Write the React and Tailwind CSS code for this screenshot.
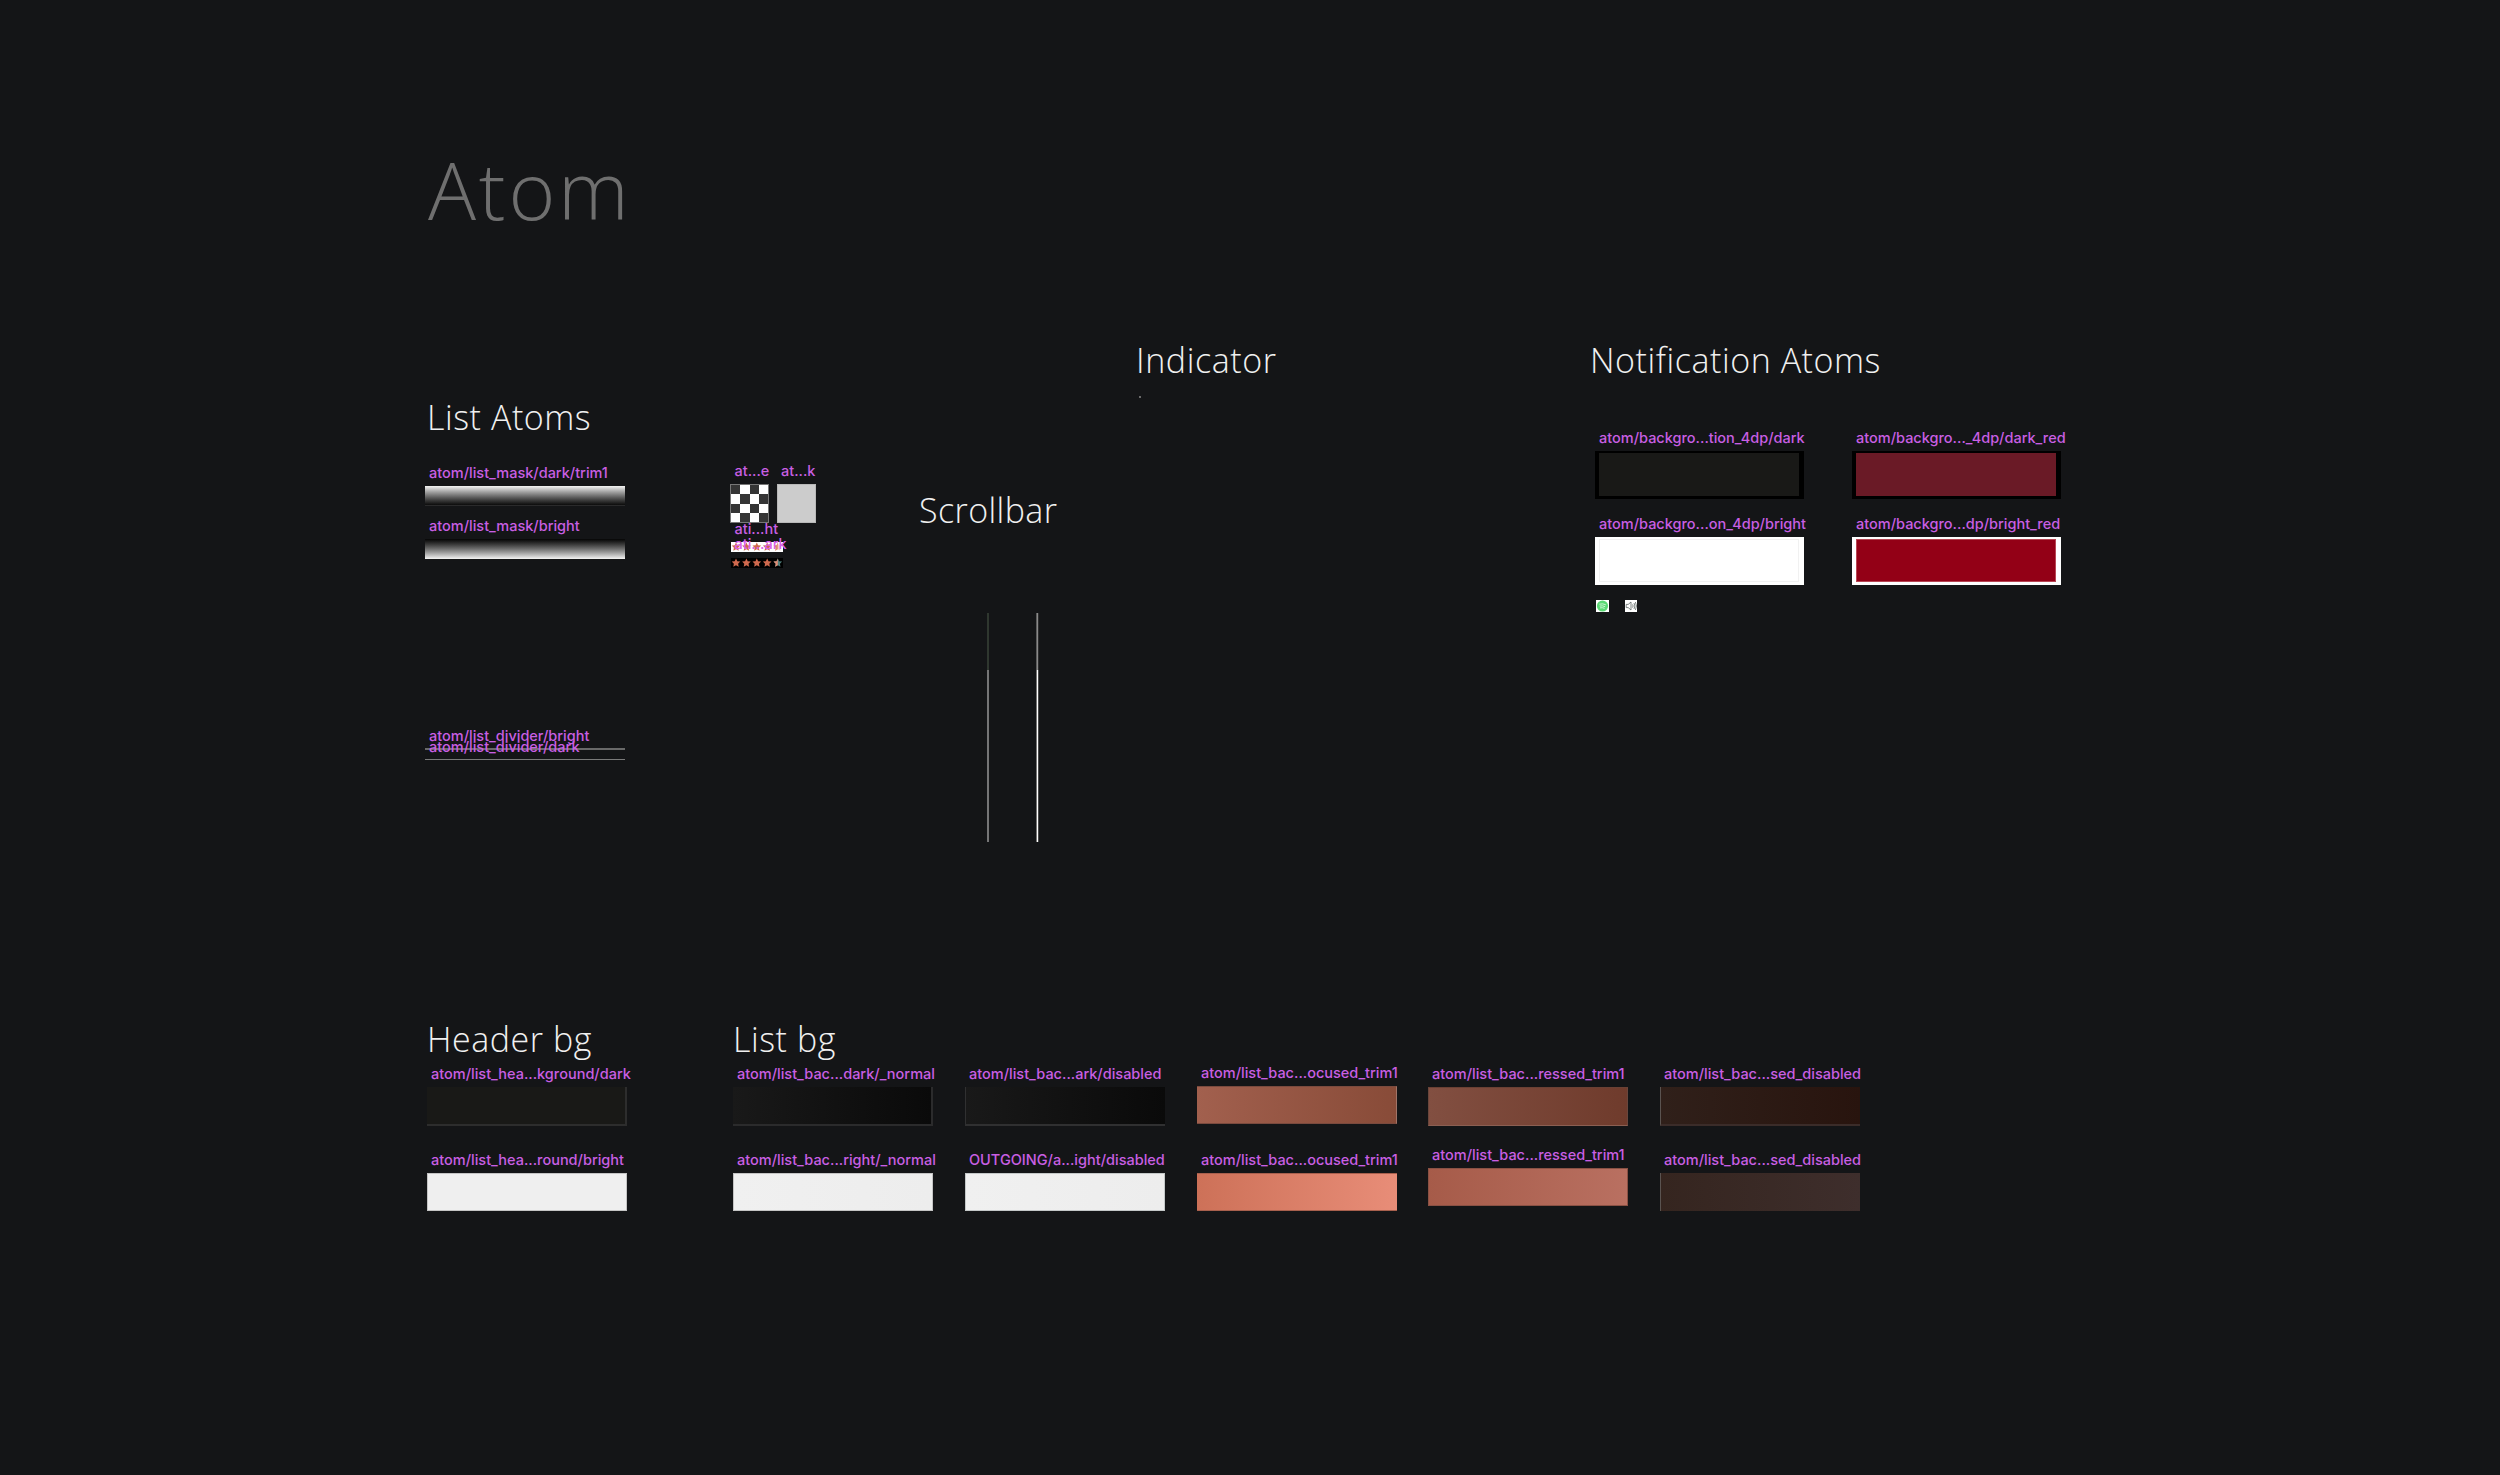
import { twMerge } from "tailwind-merge";

const STAR = "M5 0.5 6.3 3.2 9.3 3.6 7.1 5.7 7.7 8.8 5 7.3 2.3 8.8 2.9 5.7 0.7 3.6 3.7 3.2Z";

function Heading({ children, className }) {
  return (
    <h2
      className={twMerge(
        "font-['Open_Sans',sans-serif] text-[34px] leading-[46px] font-light tracking-[0.55px] whitespace-nowrap text-[#f0f0f0]",
        className
      )}
    >
      {children}
    </h2>
  );
}

function Label({ children, className }) {
  return (
    <div
      className={twMerge(
        "h-[18px] font-['Inter',sans-serif] text-[14.5px] leading-[18px] font-[450] whitespace-nowrap text-[#c95fe3]",
        className
      )}
    >
      {children}
    </div>
  );
}

function Swatch({ label, box }) {
  return (
    <div className="w-[200px]">
      <Label className="mb-1 pl-1">{label}</Label>
      <div className={twMerge("h-[39px]", box)} />
    </div>
  );
}

function Notification({ label, outer, inner }) {
  return (
    <div className="w-[210px]">
      <Label className="mb-1 pl-1">{label}</Label>
      <div className={twMerge("h-12 w-[209px] pt-0.5 pr-[4px] pb-[3px] pl-[4px]", outer)}>
        <div className={twMerge("h-full w-[200px]", inner)} />
      </div>
    </div>
  );
}

function Rating({ className, tail }) {
  return (
    <svg viewBox="0 0 52 10" className={twMerge("block h-2.5 w-[52px]", className)}>
      <path d={STAR} fill="#d0694e" />
      <path d={STAR} transform="translate(10.4 0)" fill="#d0694e" />
      <path d={STAR} transform="translate(20.8 0)" fill="#d0694e" />
      <path d={STAR} transform="translate(31.2 0)" fill="#d0694e" />
      <g transform="translate(41.8 0)">
        <path d={STAR} fill={tail} />
        <path d="M5 0.5V7.3L2.3 8.8 2.9 5.7 0.7 3.6 3.7 3.2Z" fill="#e08a72" />
      </g>
    </svg>
  );
}

function ListAtoms() {
  return (
    <section className="pt-[151px]">
      <Heading className="pl-0.5">List Atoms</Heading>
      <Label className="mt-6 pl-1">atom/list_mask/dark/trim1</Label>
      <div className="mt-1 h-5 w-[200px] border-b border-[#2a2a2b] bg-linear-to-b from-[#f4f4f4] to-[#0c0c0c]" />
      <Label className="mt-[11px] pl-1">atom/list_mask/bright</Label>
      <div className="mt-1 h-5 w-[200px] bg-linear-to-b from-[#060606] to-[#f4f4f4]" />
      {/* the two divider symbols sit 11px apart, so their labels collide */}
      <div className="relative mt-[168px] h-[34px] w-[200px] pt-[21px]">
        <div className="h-0.5 bg-[#696969]" />
        <div className="mt-[9px] h-px bg-[#7a7a7a]" />
        <Label className="absolute top-0 left-1">atom/list_divider/bright</Label>
        <Label className="absolute top-[11px] left-1">atom/list_divider/dark</Label>
      </div>
    </section>
  );
}

function ImageAtoms() {
  return (
    <section className="pt-[219px]">
      <div className="flex gap-2">
        <div className="w-[39px]">
          <Label className="mb-1 pl-[4.5px]">at...e</Label>
          <div className="grid h-[39px] grid-cols-4 grid-rows-4 border border-[#777] bg-white">
            {Array.from({ length: 16 }, (_, i) => (
              <div key={i} className={(i + Math.floor(i / 4)) % 2 ? "bg-white" : "bg-[#353535]"} />
            ))}
          </div>
        </div>
        <div className="w-[39px]">
          <Label className="mb-1 pl-1">at...k</Label>
          <div className="h-[39px] border border-[#b8b8b8] bg-[#cccccc]" />
        </div>
      </div>
      <Label className="mt-[-3px] pl-[4.5px]">ati...ht</Label>
      <div className="relative mt-1 ml-[0.5px] w-[52px]">
        <Rating className="bg-white" tail="#f0d0c4" />
        <Label className="absolute -top-[7px] left-1 text-[#d860ea]">ati...ark</Label>
        <Rating className="mt-1.5 bg-black" tail="#4f7f7c" />
      </div>
    </section>
  );
}

function Scrollbar() {
  return (
    <section className="pt-[244px]">
      <Heading className="pl-px tracking-[0.4px]">Scrollbar</Heading>
      <div className="mt-20 ml-[69px] flex gap-[47px]">
        <div className="w-0.5">
          <div className="h-[57px] bg-[#2f372f]" />
          <div className="h-[172px] bg-[#757576]" />
        </div>
        <div className="w-[3px]">
          <div className="h-[57px] border-x border-l-[#5c5c5c] border-r-[#2c2c2d] bg-[#8a8a8a]" />
          <div className="h-[172px] border-x border-l-[#777] border-r-[#4a4a4a] bg-white" />
        </div>
      </div>
    </section>
  );
}

function Indicator() {
  return (
    <section className="pt-[94px]">
      <Heading className="pl-px tracking-[0.6px]">Indicator</Heading>
      <div className="mt-[13px] ml-1 size-0.5 rounded-full bg-[#888]" />
    </section>
  );
}

function NotificationAtoms() {
  return (
    <section className="pt-[94px]">
      <Heading className="pl-[3px]">Notification Atoms</Heading>
      <div className="mt-[46px] ml-2 grid w-[467px] grid-cols-[210px_210px] gap-x-[47px] gap-y-4">
        <Notification label="atom/backgro...tion_4dp/dark" outer="bg-black" inner="bg-[#191917]" />
        <Notification label="atom/backgro..._4dp/dark_red" outer="bg-black" inner="bg-[#6a1a26]" />
        <Notification
          label="atom/backgro...on_4dp/bright"
          outer="bg-white"
          inner="border border-[#f1f1f1] bg-white"
        />
        <Notification
          label="atom/backgro...dp/bright_red"
          outer="bg-white"
          inner="border border-[#b84654] bg-[#930016]"
        />
      </div>
      <div className="mt-[15px] ml-[9px] flex gap-4">
        <svg viewBox="0 0 13 12" className="h-3 w-[13px] bg-white">
          <circle cx="6.5" cy="6" r="5.6" fill="#5bd975" />
          <path
            d="M3.4 4.2Q6.8 3.2 9.8 4.8M3.7 6.1Q6.6 5.3 9.2 6.7M4 7.9Q6.5 7.3 8.6 8.4"
            fill="none"
            stroke="#d7f7dd"
            strokeWidth="0.9"
          />
        </svg>
        <svg viewBox="0 0 12 12" className="size-3 bg-white">
          <path
            d="M1.2 4.4H3.2L6 2V10L3.2 7.6H1.2ZM7.6 4.4Q8.6 6 7.6 7.6M9 3Q10.8 6 9 9M10.4 2Q12.6 6 10.4 10"
            fill="none"
            stroke="#5d6663"
            strokeWidth="0.8"
          />
        </svg>
      </div>
    </section>
  );
}

function Column({ children, className }) {
  return <div className={twMerge("flex w-[200px] flex-col gap-[25px]", className)}>{children}</div>;
}

function Backgrounds() {
  return (
    <div className="flex">
      <section className="w-[306px]">
        <Heading>Header bg</Heading>
        <Column className="mt-[3px]">
          <Swatch
            label="atom/list_hea...kground/dark"
            box="border-r-2 border-b-2 border-[#2d2d2d] bg-[#191917]"
          />
          <Swatch
            label="atom/list_hea...round/bright"
            box="h-[38px] border border-[#c4c4c4] bg-[#efefef]"
          />
        </Column>
      </section>
      <section>
        <Heading>List bg</Heading>
        <div className="mt-[3px] flex gap-8">
          <Column>
            <Swatch
              label="atom/list_bac...dark/_normal"
              box="border-r-2 border-b-2 border-[#2b2b2c] bg-linear-to-r from-[#191919] to-[#0a0a0a]"
            />
            <Swatch
              label="atom/list_bac...right/_normal"
              box="h-[38px] border border-[#c4c4c4] bg-linear-to-r from-[#f0f0f0] to-[#ededed]"
            />
          </Column>
          <Column>
            <Swatch
              label="atom/list_bac...ark/disabled"
              box="border-b-2 border-l border-[#303031] bg-linear-to-r from-[#191919] to-[#0a0a0a]"
            />
            <Swatch
              label="OUTGOING/a...ight/disabled"
              box="h-[38px] border border-[#c4c8c8] bg-linear-to-r from-[#f0f0f0] to-[#ededed]"
            />
          </Column>
          <Column className="-mt-px gap-[27px]">
            <Swatch
              label="atom/list_bac...ocused_trim1"
              box="h-[38px] border-y border-r border-y-[#7a4a3e] border-r-[#a07468] bg-linear-to-r from-[#a2604e] to-[#884b38]"
            />
            <Swatch
              label="atom/list_bac...ocused_trim1"
              box="h-[38px] border-y border-[#a8604d] bg-linear-to-r from-[#cd7158] to-[#e88d78]"
            />
          </Column>
          <Column className="-ml-px gap-5">
            <Swatch
              label="atom/list_bac...ressed_trim1"
              box="border border-x-[#6a463c] border-t-[#6a4034] border-b-[#8b5f52] bg-linear-to-r from-[#824f41] to-[#6f3b2c]"
            />
            <Swatch
              label="atom/list_bac...ressed_trim1"
              box="h-[38px] border border-[#8a5144] bg-linear-to-r from-[#a65b49] to-[#b97061]"
            />
          </Column>
          <Column>
            <Swatch
              label="atom/list_bac...sed_disabled"
              box="border-b-2 border-l border-b-[#3b2c29] border-l-[#5a5350] bg-linear-to-r from-[#30201a] to-[#28140e]"
            />
            <Swatch
              label="atom/list_bac...sed_disabled"
              box="h-[38px] border-l border-[#5a5350] bg-linear-to-r from-[#35251f] to-[#3e2e2c]"
            />
          </Column>
        </div>
      </section>
    </div>
  );
}

export default function App() {
  return (
    <main className="h-[1475px] w-[2500px] overflow-hidden bg-[#141517] pt-[134px]">
      <h1 className="pl-[428px] font-['Open_Sans',sans-serif] text-[80px] leading-[109px] font-light tracking-[2.8px] text-[#6f6f6f]">
        Atom
      </h1>
      <div className="grid h-[773px] grid-cols-[305px_188px_217px_452px_480px] pl-[425px]">
        <ListAtoms />
        <ImageAtoms />
        <Scrollbar />
        <Indicator />
        <NotificationAtoms />
      </div>
      <div className="pl-[427px]">
        <Backgrounds />
      </div>
    </main>
  );
}
